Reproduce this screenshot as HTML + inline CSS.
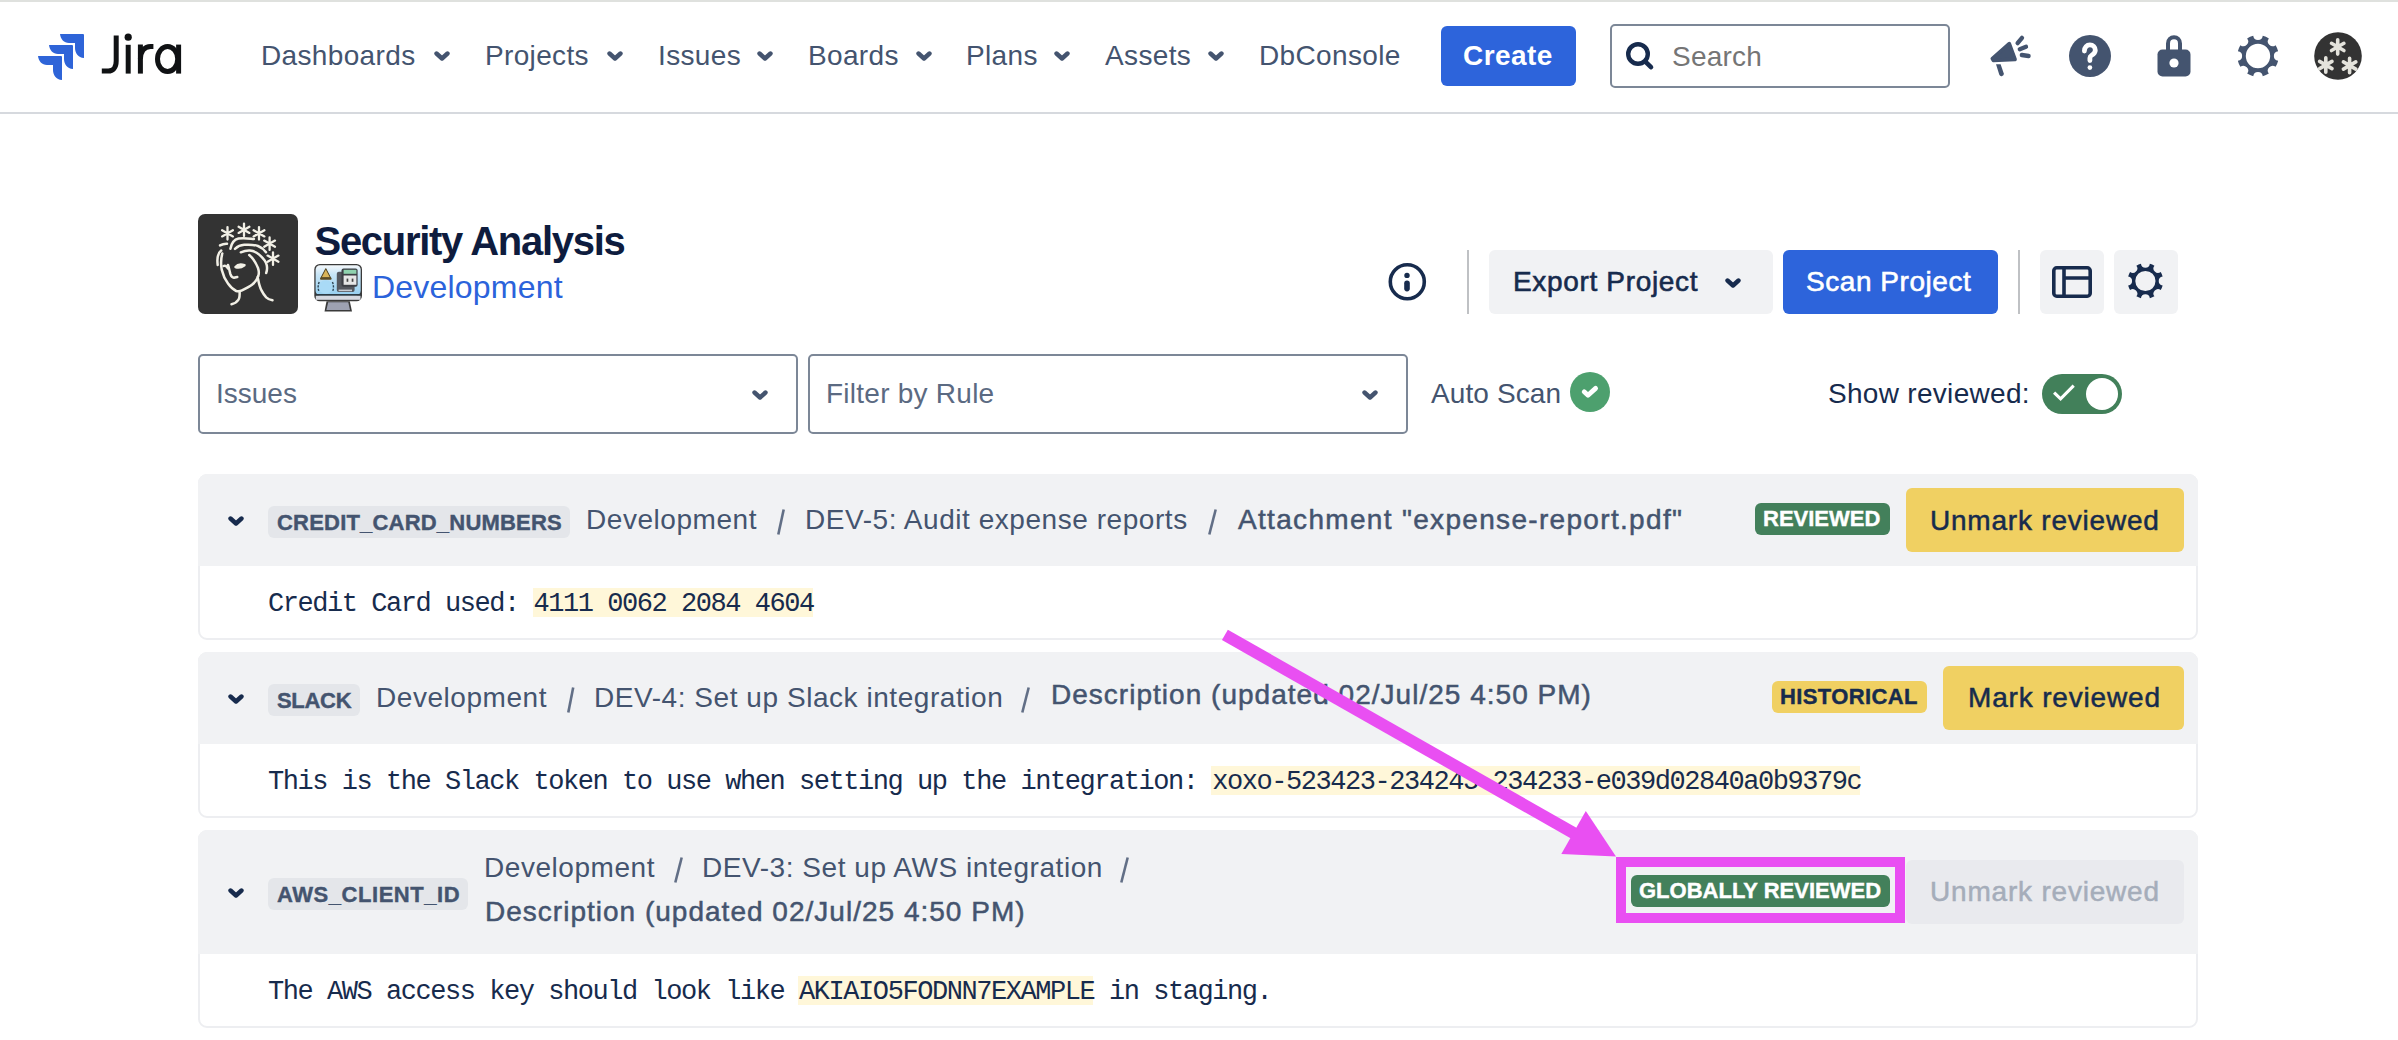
<!DOCTYPE html>
<html><head><meta charset="utf-8">
<style>
html,body{margin:0;padding:0;background:#fff;}
body{width:2398px;height:1040px;overflow:hidden;position:relative;font-family:"Liberation Sans",sans-serif;}
.a{position:absolute;}
.t{position:absolute;white-space:nowrap;line-height:1;}
.nav{font-size:28px;color:#44546F;letter-spacing:0.35px;}
.chev{position:absolute;width:16px;height:10px;}
.mono{font-family:"Liberation Mono",monospace;font-size:27px;letter-spacing:-1.45px;color:#172B4D;}
.hl{background:transparent;}
.hlb{position:absolute;background:#FFF7D9;}
.card{position:absolute;left:198px;width:1996px;border:2px solid #EDEEF1;border-radius:9px;background:#fff;}
.chd{position:absolute;left:198px;width:2000px;background:#F1F2F4;border-radius:9px 9px 0 0;}
.tag{position:absolute;height:32px;background:#E4E6EA;border-radius:6px;}
.tagt{font-size:22px;font-weight:bold;color:#44546F;-webkit-text-stroke:0.4px currentColor;}
.bc{font-size:28px;color:#44546F;letter-spacing:0.55px;}
.med{-webkit-text-stroke:0.5px #44546F;}
.sl{font-size:28px;color:#626F86;}
.badge{position:absolute;height:32px;border-radius:6px;}
.btn{position:absolute;border-radius:6px;}
</style></head>
<body>
<!-- header borders -->
<div class="a" style="left:0;top:0;width:2398px;height:2px;background:#DFE1DE"></div>
<div class="a" style="left:0;top:112px;width:2398px;height:2px;background:#D6D9DE"></div>

<!-- Jira logo -->
<svg class="a" style="left:36px;top:32px" width="52" height="52" viewBox="0 0 52 52">
  <g fill="#2E64D8">
    <path d="M24 2 H47 Q48 2 48 3 V26 C42 25.5 39 21 39 16 V11 H33 C28 11 24.5 7 24 2 Z"/>
    <path d="M13 13 H36 Q37 13 37 14 V37 C31 36.5 28 32 28 27 V22 H22 C17 22 13.5 18 13 13 Z"/>
    <path d="M2 24 H25 Q26 24 26 25 V48 C20 47.5 17 43 17 38 V33 H11 C6 33 2.5 29 2 24 Z"/>
  </g>
</svg>
<svg class="a" style="left:0;top:0" width="200" height="100" viewBox="0 0 200 100">
  <g fill="none" stroke="#101214" stroke-width="5">
    <path d="M116.2 35.6 V61 C116.2 67.8 112.8 71.1 108.3 71.1 H101.8"/>
    <path d="M128.2 44.8 V73.6"/>
    <path d="M140.4 73.6 V44.5"/><path d="M140.4 59 C140.8 50.5 145 46.6 150.5 46.6 H153.4"/>
    <ellipse cx="167.6" cy="59.1" rx="10.1" ry="12.5"/>
    <path d="M178.6 44.6 V73.6"/>
  </g>
  <circle cx="128.2" cy="37.2" r="3.6" fill="#101214"/>
</svg>

<!-- nav -->
<div class="t nav" style="left:261px;top:42px">Dashboards</div>
<svg class="chev" style="left:434px;top:51px" viewBox="0 0 16 10"><path d="M2.5 2.5 L8 7.5 L13.5 2.5" fill="none" stroke="#44546F" stroke-width="4.4" stroke-linecap="round" stroke-linejoin="round"/></svg>
<div class="t nav" style="left:485px;top:42px">Projects</div>
<svg class="chev" style="left:607px;top:51px" viewBox="0 0 16 10"><path d="M2.5 2.5 L8 7.5 L13.5 2.5" fill="none" stroke="#44546F" stroke-width="4.4" stroke-linecap="round" stroke-linejoin="round"/></svg>
<div class="t nav" style="left:658px;top:42px">Issues</div>
<svg class="chev" style="left:757px;top:51px" viewBox="0 0 16 10"><path d="M2.5 2.5 L8 7.5 L13.5 2.5" fill="none" stroke="#44546F" stroke-width="4.4" stroke-linecap="round" stroke-linejoin="round"/></svg>
<div class="t nav" style="left:808px;top:42px">Boards</div>
<svg class="chev" style="left:916px;top:51px" viewBox="0 0 16 10"><path d="M2.5 2.5 L8 7.5 L13.5 2.5" fill="none" stroke="#44546F" stroke-width="4.4" stroke-linecap="round" stroke-linejoin="round"/></svg>
<div class="t nav" style="left:966px;top:42px">Plans</div>
<svg class="chev" style="left:1054px;top:51px" viewBox="0 0 16 10"><path d="M2.5 2.5 L8 7.5 L13.5 2.5" fill="none" stroke="#44546F" stroke-width="4.4" stroke-linecap="round" stroke-linejoin="round"/></svg>
<div class="t nav" style="left:1105px;top:42px">Assets</div>
<svg class="chev" style="left:1208px;top:51px" viewBox="0 0 16 10"><path d="M2.5 2.5 L8 7.5 L13.5 2.5" fill="none" stroke="#44546F" stroke-width="4.4" stroke-linecap="round" stroke-linejoin="round"/></svg>
<div class="t nav" style="left:1259px;top:42px">DbConsole</div>

<!-- create -->
<div class="btn" style="left:1441px;top:26px;width:135px;height:60px;background:#2D64DB"></div>
<div class="t" style="left:1463px;top:42px;font-size:28px;font-weight:bold;color:#fff;letter-spacing:0.45px">Create</div>

<!-- search -->
<div class="a" style="left:1610px;top:24px;width:336px;height:60px;border:2px solid #7C8797;border-radius:5px"></div>
<svg class="a" style="left:1620px;top:36px" width="40" height="40" viewBox="0 0 40 40">
  <circle cx="18" cy="18" r="9.8" fill="none" stroke="#172B4D" stroke-width="4.4"/>
  <path d="M25.6 25.8 L31 31.2" stroke="#172B4D" stroke-width="4.6" stroke-linecap="round"/>
</svg>
<div class="t" style="left:1672px;top:43px;font-size:28px;color:#757575;letter-spacing:0.2px">Search</div>

<!-- megaphone -->
<svg class="a" style="left:1984px;top:32px" width="50" height="48" viewBox="0 0 50 48">
  <g fill="#44546F" stroke="#44546F" stroke-linejoin="round" stroke-linecap="round">
    <path d="M8.4 26.6 L25.3 11.8 L31 27.4 L9.4 28.3 Z" stroke-width="3.8"/>
    <path d="M12 32.2 L16.6 32.2 L19.7 41.2 A2.35 2.35 0 0 1 15.3 42.8 Z" stroke="none"/>
    <path d="M33.6 11.2 L38 5.8" stroke-width="4.3" fill="none"/>
    <path d="M35.8 17.2 L42 14.8" stroke-width="4.3" fill="none"/>
    <path d="M37.8 23 L44.6 24" stroke-width="4.3" fill="none"/>
  </g>
</svg>

<!-- help -->
<svg class="a" style="left:2066px;top:32px" width="48" height="48" viewBox="0 0 48 48">
  <circle cx="24" cy="24" r="21" fill="#44546F"/>
  <path d="M18.4 19 C18.4 15.3 20.8 12.9 23.9 12.9 C27 12.9 29.3 15.2 29.3 18.3 C29.3 21.2 27.2 22.5 25.4 23.5 C24.4 24.1 23.9 24.8 23.9 26 V28.6" fill="none" stroke="#fff" stroke-width="4.8" stroke-linecap="round"/>
  <circle cx="24" cy="22" r="0" fill="#fff"/>
  <circle cx="23.9" cy="35.6" r="2.35" fill="#fff"/>
</svg>

<!-- lock -->
<svg class="a" style="left:2152px;top:32px" width="44" height="48" viewBox="0 0 44 48">
  <path d="M16 18 V11.5 C16 7.8 18.7 5.3 22 5.3 C25.3 5.3 28 7.8 28 11.5 V18" fill="none" stroke="#44546F" stroke-width="4"/>
  <rect x="5.5" y="17.5" width="33" height="27" rx="5" fill="#44546F"/>
  <circle cx="22" cy="31" r="4.6" fill="#fff"/>
</svg>

<!-- gear (header) -->
<svg class="a" style="left:2234px;top:32px" width="48" height="48" viewBox="0 0 48 48">
  <g transform="translate(24 24)">
    <path fill="#44546F" fill-rule="evenodd" d="M4.77 -20.14 A20.70 20.70 0 0 1 10.87 -17.61 A4.80 4.80 0 0 0 17.61 -10.87 A20.70 20.70 0 0 1 20.14 -4.77 A4.80 4.80 0 0 0 20.14 4.77 A20.70 20.70 0 0 1 17.61 10.87 A4.80 4.80 0 0 0 10.87 17.61 A20.70 20.70 0 0 1 4.77 20.14 A4.80 4.80 0 0 0 -4.77 20.14 A20.70 20.70 0 0 1 -10.87 17.61 A4.80 4.80 0 0 0 -17.61 10.87 A20.70 20.70 0 0 1 -20.14 4.77 A4.80 4.80 0 0 0 -20.14 -4.77 A20.70 20.70 0 0 1 -17.61 -10.87 A4.80 4.80 0 0 0 -10.87 -17.61 A20.70 20.70 0 0 1 -4.77 -20.14 A4.80 4.80 0 0 0 4.77 -20.14 Z M12.20 0 A12.20 12.20 0 1 0 -12.20 0 A12.20 12.20 0 1 0 12.20 0 Z"/>
  </g>
</svg>

<!-- avatar -->
<svg class="a" style="left:2314px;top:32px" width="48" height="48" viewBox="0 0 48 48">
  <circle cx="24" cy="24" r="23.8" fill="#333"/>
  <g stroke="#EEEDE6" stroke-width="3.6" stroke-linecap="round" opacity="0.95">
    <g transform="translate(23.7 14.9)"><path d="M0 -7.2 V7.2 M-6.2 -3.6 L6.2 3.6 M-6.2 3.6 L6.2 -3.6"/></g>
    <g transform="translate(11.8 33)"><path d="M0 -7.2 V7.2 M-6.2 -3.6 L6.2 3.6 M-6.2 3.6 L6.2 -3.6"/></g>
    <g transform="translate(35.6 33.5)"><path d="M0 -7.2 V7.2 M-6.2 -3.6 L6.2 3.6 M-6.2 3.6 L6.2 -3.6"/></g>
  </g>
</svg>

<!-- project avatar -->
<div class="a" style="left:198px;top:214px;width:100px;height:100px;background:#333;border-radius:7px"></div>
<svg class="a" style="left:198px;top:214px" width="100" height="100" viewBox="0 0 100 100">
  <g fill="none" stroke="#F2F0E6" stroke-width="2.5" stroke-linecap="round" stroke-linejoin="round">
    <path d="M19.7 51 C18.8 44 20 39 23.2 36.6"/>
    <path d="M22 31.4 C24.5 30 27 29.6 29 29.7"/>
    <path d="M32.4 34.8 C33.5 29 36 25.5 40.5 24.5 C46 23.5 51 24.5 56 25"/>
    <path d="M37 34.8 C40 32 43 31 46.2 30.8 C52 30.4 57 31 60 32 C64 33.5 66 35.5 68 38.3"/>
    <path d="M42.8 38.3 C46 37 49 36.4 52 36.6 C56 37 59 38.5 61.2 40.6 C65 44 68 47.5 68.7 51 C69.3 54 69 57 68.2 59"/>
    <path d="M24.3 39.5 C22.8 45 22.8 50.5 23.7 55.6 C25 61 27 65.5 30 69.5 C32.5 73 35 75.5 38.2 77 C40 77.6 42 77.4 44 76.4 C48 74.5 51.5 72.8 54.3 70.6 C57 68.5 59 65.5 60 62.5"/>
    <path d="M30 51 C31 54 31.5 57 32.4 60.2 C33.2 62.5 34.5 63.7 35.8 63.7 L39.3 63"/>
    <path d="M37.5 53 C39.5 50.5 43 50 46.5 51.2 C43.5 53.5 40 54 37.5 53 Z" fill="#F2F0E6"/>
    <path d="M25.5 52 C27 51.2 29 52 30 54.5"/>
    <path d="M51.2 41 C55 44 58 49 60 54 C61 57 61.2 60 60 62.5"/>
    <path d="M41.6 77.5 C41.8 81 41.5 84 40.5 85.6 C39 88 36.5 89.5 33.5 90.2"/>
    <path d="M60 64.8 C60.8 69 61.5 73 63.5 76.4 C65 79.5 66.5 81.5 68.2 83.3 C70 85 72 85.8 74.5 86.2"/>
  </g>
  <g stroke="#F2F0E6" stroke-width="2.3" stroke-linecap="round">
    <g transform="translate(29.5 19.3)"><path d="M0 -6.2 V6.2 M-5.4 -3.1 L5.4 3.1 M-5.4 3.1 L5.4 -3.1"/></g>
    <g transform="translate(46 15.8)"><path d="M0 -6.2 V6.2 M-5.4 -3.1 L5.4 3.1 M-5.4 3.1 L5.4 -3.1"/></g>
    <g transform="translate(61 19.3)"><path d="M0 -6.2 V6.2 M-5.4 -3.1 L5.4 3.1 M-5.4 3.1 L5.4 -3.1"/></g>
    <g transform="translate(71.6 29.7)"><path d="M0 -6.2 V6.2 M-5.4 -3.1 L5.4 3.1 M-5.4 3.1 L5.4 -3.1"/></g>
    <g transform="translate(75 44.7)"><path d="M0 -6.2 V6.2 M-5.4 -3.1 L5.4 3.1 M-5.4 3.1 L5.4 -3.1"/></g>
  </g>
</svg>

<div class="t" style="left:314.5px;top:221px;font-size:40px;font-weight:bold;color:#0E1C3E;letter-spacing:-1.3px">Security Analysis</div>

<!-- dev icon -->
<svg class="a" style="left:308px;top:258px" width="60" height="60" viewBox="0 0 60 60">
  <defs><linearGradient id="scr" x1="0" y1="0" x2="0" y2="1"><stop offset="0" stop-color="#F4F8FB"/><stop offset="0.3" stop-color="#C8E5F6"/><stop offset="1" stop-color="#96CFF0"/></linearGradient></defs>
  <rect x="6.3" y="6" width="47.7" height="37.3" rx="5.5" fill="#3a3a3a"/>
  <rect x="7.6" y="7.3" width="45.1" height="30" rx="4.5" fill="url(#scr)"/>
  <rect x="7.6" y="36" width="45.1" height="1.5" fill="#2E3C46"/>
  <rect x="7.8" y="37.8" width="44.7" height="4" fill="#D6D9E1"/>
  <path d="M18.5 43.3 L41.8 43.3 L44 53.4 L16.5 53.4 Z" fill="#3a3a3a"/>
  <path d="M20.2 44.2 L40.3 44.2 L42 52 L18.4 52 Z" fill="#9EA2B2"/>
  <path d="M17.8 10.6 L13 19.8 L22.6 19.8 Z" fill="#D8B45A" stroke="#4a3c1c" stroke-width="1" stroke-linejoin="round"/>
  <rect x="12" y="19.6" width="11.6" height="2.2" rx="1" fill="#5B4A22"/>
  <ellipse cx="17.8" cy="29" rx="7.4" ry="6.8" fill="#A9DAF6"/>
  <path d="M11.2 24 C9.8 27 9.8 31 11.2 34 M24.4 24 C25.8 27 25.8 31 24.4 34" fill="none" stroke="#2f4654" stroke-width="1.4" stroke-dasharray="2.2 1.2"/>
  <rect x="28.8" y="13.8" width="17.8" height="20.2" rx="2" fill="#55585f"/>
  <rect x="30.6" y="31.6" width="13.4" height="1.6" fill="#C9CCD3"/>
  <rect x="33.5" y="10.4" width="16.1" height="18.4" rx="2" fill="#3d3f45"/>
  <rect x="35.6" y="11.8" width="12.8" height="4" fill="#8FD2AE"/>
  <rect x="35.6" y="17.5" width="12.8" height="9.3" fill="#E6E6E6"/>
  <rect x="38.6" y="20.6" width="1.7" height="3.2" fill="#444"/><rect x="43.7" y="20.6" width="1.7" height="3.2" fill="#444"/>
</svg>
<div class="t" style="left:372px;top:271px;font-size:32px;color:#2B63DB;letter-spacing:0.2px">Development</div>

<!-- info icon -->
<svg class="a" style="left:1386px;top:261px" width="42" height="42" viewBox="0 0 42 42">
  <circle cx="21.3" cy="20.8" r="17" fill="none" stroke="#172B4D" stroke-width="3.6"/>
  <circle cx="21" cy="14.4" r="2.7" fill="#172B4D"/>
  <path d="M21 22.3 V27.6" stroke="#172B4D" stroke-width="5.6" stroke-linecap="round"/>
</svg>
<div class="a" style="left:1467px;top:250px;width:2px;height:64px;background:#BFC1C4"></div>

<!-- export -->
<div class="btn" style="left:1489px;top:250px;width:284px;height:64px;background:#F1F2F4"></div>
<div class="t" style="left:1513px;top:268px;font-size:28px;color:#172B4D;-webkit-text-stroke:0.6px #172B4D;letter-spacing:0.66px">Export Project</div>
<svg class="chev" style="left:1725px;top:278px" viewBox="0 0 16 10"><path d="M2.5 2.5 L8 7.5 L13.5 2.5" fill="none" stroke="#172B4D" stroke-width="4.4" stroke-linecap="round" stroke-linejoin="round"/></svg>

<!-- scan -->
<div class="btn" style="left:1783px;top:250px;width:215px;height:64px;background:#2D64DB"></div>
<div class="t" style="left:1806px;top:268px;font-size:28px;color:#fff;-webkit-text-stroke:0.6px #fff;letter-spacing:0.55px">Scan Project</div>
<div class="a" style="left:2018px;top:250px;width:2px;height:64px;background:#BFC1C4"></div>

<!-- layout btn -->
<div class="btn" style="left:2040px;top:250px;width:64px;height:64px;background:#F1F2F4"></div>
<svg class="a" style="left:2040px;top:250px" width="64" height="64" viewBox="0 0 64 64">
  <rect x="13.8" y="17.8" width="36.4" height="28.4" rx="3" fill="none" stroke="#172B4D" stroke-width="3.6"/>
  <path d="M24 18 V46 M24 28 H50" stroke="#172B4D" stroke-width="3.6"/>
</svg>
<!-- gear btn -->
<div class="btn" style="left:2114px;top:250px;width:64px;height:64px;background:#F1F2F4"></div>
<svg class="a" style="left:2114px;top:250px" width="64" height="64" viewBox="0 0 64 64">
  <g transform="translate(31.4 31)"><path fill="#172B4D" fill-rule="evenodd" d="M4.46 -17.23 A17.80 17.80 0 0 1 9.03 -15.34 A4.50 4.50 0 0 0 15.34 -9.03 A17.80 17.80 0 0 1 17.23 -4.46 A4.50 4.50 0 0 0 17.23 4.46 A17.80 17.80 0 0 1 15.34 9.03 A4.50 4.50 0 0 0 9.03 15.34 A17.80 17.80 0 0 1 4.46 17.23 A4.50 4.50 0 0 0 -4.46 17.23 A17.80 17.80 0 0 1 -9.03 15.34 A4.50 4.50 0 0 0 -15.34 9.03 A17.80 17.80 0 0 1 -17.23 4.46 A4.50 4.50 0 0 0 -17.23 -4.46 A17.80 17.80 0 0 1 -15.34 -9.03 A4.50 4.50 0 0 0 -9.03 -15.34 A17.80 17.80 0 0 1 -4.46 -17.23 A4.50 4.50 0 0 0 4.46 -17.23 Z M10.10 0 A10.10 10.10 0 1 0 -10.10 0 A10.10 10.10 0 1 0 10.10 0 Z"/></g>
</svg>

<!-- filter row -->
<div class="a" style="left:198px;top:354px;width:596px;height:76px;border:2px solid #7C8797;border-radius:5px"></div>
<div class="t" style="left:216px;top:380px;font-size:28px;color:#5B6A82">Issues</div>
<svg class="chev" style="left:752px;top:390px" viewBox="0 0 16 10"><path d="M2.5 2.5 L8 7.5 L13.5 2.5" fill="none" stroke="#44546F" stroke-width="4.4" stroke-linecap="round" stroke-linejoin="round"/></svg>
<div class="a" style="left:808px;top:354px;width:596px;height:76px;border:2px solid #7C8797;border-radius:5px"></div>
<div class="t" style="left:826px;top:380px;font-size:28px;color:#5B6A82;letter-spacing:0.25px">Filter by Rule</div>
<svg class="chev" style="left:1362px;top:390px" viewBox="0 0 16 10"><path d="M2.5 2.5 L8 7.5 L13.5 2.5" fill="none" stroke="#44546F" stroke-width="4.4" stroke-linecap="round" stroke-linejoin="round"/></svg>

<div class="t" style="left:1431px;top:380px;font-size:28px;color:#44546F;letter-spacing:0.1px">Auto Scan</div>
<svg class="a" style="left:1570px;top:372px" width="40" height="40" viewBox="0 0 40 40">
  <circle cx="20" cy="20" r="20" fill="#4DA06E"/>
  <path d="M14.2 19.8 L18 23.3 L25.6 16.4" fill="none" stroke="#fff" stroke-width="4.8" stroke-linecap="round" stroke-linejoin="round"/>
</svg>

<div class="t" style="left:1828px;top:380px;font-size:28px;color:#172B4D;letter-spacing:0.3px">Show reviewed:</div>
<div class="a" style="left:2042px;top:374px;width:80px;height:40px;border-radius:20px;background:#42805A"></div>
<div class="a" style="left:2086px;top:378px;width:32px;height:32px;border-radius:16px;background:#fff"></div>
<svg class="a" style="left:2050px;top:382px" width="30" height="24" viewBox="0 0 30 24">
  <path d="M5.2 11.6 L10.6 16.8 L22.6 4.8" fill="none" stroke="#fff" stroke-width="3.1" stroke-linecap="square"/>
</svg>

<!-- CARD 1 -->
<div class="card" style="top:474px;height:162px"></div>
<div class="chd" style="top:474px;height:92px"></div>
<svg class="chev" style="left:228px;top:516px" viewBox="0 0 16 10"><path d="M2.5 2.5 L8 7.5 L13.5 2.5" fill="none" stroke="#172B4D" stroke-width="4.4" stroke-linecap="round" stroke-linejoin="round"/></svg>
<div class="tag" style="left:268px;top:506px;width:302px"></div>
<div class="t tagt" style="left:277px;top:511.5px;letter-spacing:0.2px">CREDIT_CARD_NUMBERS</div>
<div class="t bc" style="left:586px;top:506px">Development</div>
<div class="t bc" style="left:805px;top:506px">DEV-5: Audit expense reports</div>
<div class="t bc med" style="left:1238px;top:506px;letter-spacing:1.32px">Attachment "expense-report.pdf"</div>
<div class="badge" style="left:1755px;top:503px;width:135px;background:#43805B"></div>
<div class="t tagt" style="left:1763px;top:508px;color:#fff">REVIEWED</div>
<div class="btn" style="left:1906px;top:488px;width:278px;height:64px;background:#F0D062"></div>
<div class="t" style="left:1930px;top:507px;font-size:28px;color:#172B4D;-webkit-text-stroke:0.5px #172B4D;letter-spacing:0.79px">Unmark reviewed</div>
<div class="hlb" style="left:533px;top:588px;width:280px;height:29px"></div>
<div class="t mono" style="left:268px;top:591px">Credit Card used: <span class="hl">4111 0062 2084 4604</span></div>

<!-- CARD 2 -->
<div class="card" style="top:652px;height:162px"></div>
<div class="chd" style="top:652px;height:92px"></div>
<svg class="chev" style="left:228px;top:694px" viewBox="0 0 16 10"><path d="M2.5 2.5 L8 7.5 L13.5 2.5" fill="none" stroke="#172B4D" stroke-width="4.4" stroke-linecap="round" stroke-linejoin="round"/></svg>
<div class="tag" style="left:268px;top:684px;width:92px"></div>
<div class="t tagt" style="left:277px;top:689.5px;letter-spacing:-0.3px">SLACK</div>
<div class="t bc" style="left:376px;top:684px">Development</div>
<div class="t bc" style="left:594px;top:684px">DEV-4: Set up Slack integration</div>
<div class="t bc med" style="left:1051px;top:681px;letter-spacing:1.02px">Description (updated 02/Jul/25 4:50 PM)</div>
<div class="badge" style="left:1772px;top:681px;width:155px;background:#F0D062"></div>
<div class="t tagt" style="left:1780px;top:686px;color:#172B4D;letter-spacing:0.39px">HISTORICAL</div>
<div class="btn" style="left:1943px;top:666px;width:241px;height:64px;background:#F0D062"></div>
<div class="t" style="left:1968px;top:684px;font-size:28px;color:#172B4D;-webkit-text-stroke:0.5px #172B4D;letter-spacing:0.83px">Mark reviewed</div>
<div class="hlb" style="left:1211px;top:766px;width:649px;height:29px"></div>
<div class="t mono" style="left:268px;top:769px">This is the Slack token to use when setting up the integration: <span class="hl">xoxo-523423-234243-234233-e039d02840a0b9379c</span></div>

<!-- CARD 3 -->
<div class="card" style="top:830px;height:194px"></div>
<div class="chd" style="top:830px;height:124px"></div>
<svg class="chev" style="left:228px;top:888px" viewBox="0 0 16 10"><path d="M2.5 2.5 L8 7.5 L13.5 2.5" fill="none" stroke="#172B4D" stroke-width="4.4" stroke-linecap="round" stroke-linejoin="round"/></svg>
<div class="tag" style="left:268px;top:878px;width:200px"></div>
<div class="t tagt" style="left:277px;top:883.5px;letter-spacing:0.55px">AWS_CLIENT_ID</div>
<div class="t bc" style="left:484px;top:854px">Development</div>
<div class="t bc" style="left:702px;top:854px">DEV-3: Set up AWS integration</div>
<div class="t bc med" style="left:485px;top:898px;letter-spacing:1.01px">Description (updated 02/Jul/25 4:50 PM)</div>
<div class="badge" style="left:1631px;top:875px;width:259px;background:#43805B"></div>
<div class="t tagt" style="left:1639px;top:880px;color:#fff">GLOBALLY REVIEWED</div>
<div class="btn" style="left:1906px;top:860px;width:278px;height:64px;background:#E9EAEE"></div>
<div class="t" style="left:1930px;top:878px;font-size:28px;color:#A5ADBA;-webkit-text-stroke:0.5px #A5ADBA;letter-spacing:0.8px">Unmark reviewed</div>
<div class="hlb" style="left:798px;top:976px;width:295px;height:29px"></div>
<div class="t mono" style="left:268px;top:979px">The AWS access key should look like <span class="hl">AKIAIO5FODNN7EXAMPLE</span> in staging.</div>

<svg class="a" style="left:0;top:0" width="2398" height="1040" viewBox="0 0 2398 1040"><g stroke="#626F86" stroke-width="2.6"><path d="M783.7 509.5 L778.3 534.5"/><path d="M1215.7 509.5 L1209.3 534.5"/><path d="M573.2 687.5 L568.3 712.5"/><path d="M1028.7 687.5 L1022.3 712.5"/><path d="M681.7 857.5 L675.3 882.5"/><path d="M1127.7 857.5 L1121.3 882.5"/></g></svg>
<!-- magenta annotation -->
<div class="a" style="left:1616px;top:857px;width:269px;height:46px;border:10px solid #E94FF2"></div>
<svg class="a" style="left:0;top:0" width="2398" height="1040" viewBox="0 0 2398 1040">
  <path d="M1224.9 634.9 L1577 835" stroke="#E94FF2" stroke-width="12" fill="none"/>
  <path d="M1616 856.6 L1585.8 810.9 L1561.3 853.9 Z" fill="#E94FF2"/>
</svg>
</body></html>
